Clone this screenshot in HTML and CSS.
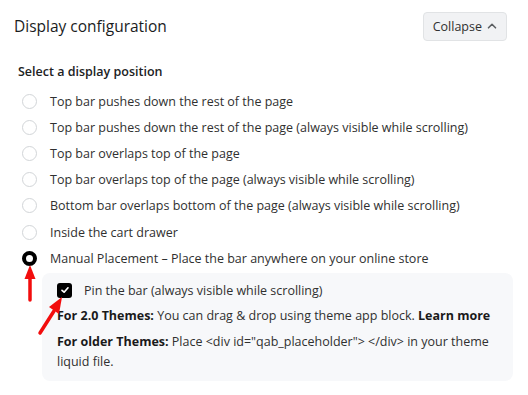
FILE: index.html
```html
<!DOCTYPE html>
<html lang="en">
<head>
  <meta charset="utf-8">
  <title>Display configuration</title>
  <link rel="stylesheet" href="styles.css">
</head>
<body>
  <div class="card">
    <div class="card-head">
      <h2>Display configuration</h2>
      <button class="collapse-btn" type="button">Collapse
        <svg width="10" height="10" viewBox="0 0 10 10"><path d="M1.5 6.8 L5 3.3 L8.5 6.8" fill="none" stroke="#5c5f62" stroke-width="1.6" stroke-linecap="round" stroke-linejoin="round"/></svg>
      </button>
    </div>

    <div class="section">
      <p class="section-title">Select a display position</p>
      <ul class="options">
        <li><span class="radio"></span>Top bar pushes down the rest of the page</li>
        <li><span class="radio"></span>Top bar pushes down the rest of the page (always visible while scrolling)</li>
        <li><span class="radio"></span>Top bar overlaps top of the page</li>
        <li><span class="radio"></span>Top bar overlaps top of the page (always visible while scrolling)</li>
        <li><span class="radio"></span>Bottom bar overlaps bottom of the page (always visible while scrolling)</li>
        <li><span class="radio"></span>Inside the cart drawer</li>
        <li><span class="radio checked"></span>Manual Placement – Place the bar anywhere on your online store</li>
      </ul>

      <div class="manual-panel">
        <div class="pin-row">
          <span class="checkbox">
            <svg width="10" height="10" viewBox="0 0 10 10"><path d="M2 5.3 L4.1 7.2 L8 2.8" fill="none" stroke="#fff" stroke-width="1.7" stroke-linecap="round" stroke-linejoin="round"/></svg>
          </span>
          Pin the bar (always visible while scrolling)
        </div>
        <p class="note"><b>For 2.0 Themes:</b> You can drag &amp; drop using theme app block. <b>Learn more</b></p>
        <p class="note"><b>For older Themes:</b> Place &lt;div id="qab_placeholder"&gt; &lt;/div&gt; in your theme liquid file.</p>
      </div>
    </div>

    <svg class="arrows" width="80" height="80" viewBox="0 0 80 80">
      <g transform="translate(0,-262)">
        <path d="M30 300 L30 276" stroke="#f20d0d" stroke-width="3.5" stroke-linecap="round"/>
        <path d="M24.5 279 L30 265 L35.5 279 Z" fill="#f20d0d"/>
        <path d="M40 333 L54 311" stroke="#f20d0d" stroke-width="3.5" stroke-linecap="round"/>
        <path d="M49 307 L62 297 L59 314 Z" fill="#f20d0d"/>
      </g>
    </svg>
  </div>
</body>
</html>
```

FILE: styles.css
```css
body {
     margin: 0;
     background: #ffffff;
     font-family: "Open Sans", "Noto Sans", sans-serif;
     color: #303030;
}

.card {
     position: relative;
     padding: 10px 21px 0 14px;
}

.card-head {
     display: flex;
     justify-content: space-between;
     align-items: center;
     height: 32px;
}

.card-head h2 {
     margin: 0;
     font-size: 15.5px;
     font-weight: 400;
     color: #1a1c1d;
}

.collapse-btn {
     display: flex;
     align-items: center;
     gap: 5px;
     height: 29px;
     padding: 0 9px 0 9px;
     background: #f1f2f4;
     border: 1px solid #e1e3e5;
     border-radius: 4px;
     font-family: inherit;
     font-size: 12.5px;
     color: #303030;
}

.section {
     padding: 21px 0 0 4px;
}

.section-title {
     margin: 0 0 8px;
     font-size: 12.5px;
     font-weight: 600;
     color: #202223;
}

.options {
     list-style: none;
     margin: 0;
     padding: 0;
}

.options li {
     display: flex;
     align-items: center;
     height: 26.2px;
     font-size: 12.5px;
}

.radio {
     box-sizing: border-box;
     width: 15px;
     height: 15px;
     margin: 0 13px 0 4px;
     border: 1px solid #d2d5d8;
     border-radius: 50%;
}

.radio.checked {
     border: 4.5px solid #000;
     background: #fff;
}

.manual-panel {
     margin: 2px -6px 0 24px;
     padding: 7px 10px 9px 15px;
     background: #f7f8fa;
     border-radius: 8px;
}

.pin-row {
     display: flex;
     align-items: center;
     height: 20px;
     font-size: 12.5px;
}

.checkbox {
     display: flex;
     align-items: center;
     justify-content: center;
     width: 15px;
     height: 15px;
     margin-right: 12px;
     background: #000;
     border-radius: 3px;
}

.note {
     margin: 6px 0 0;
     font-size: 12.5px;
     line-height: 20px;
}

.note b {
     font-weight: 700;
     color: #1a1a1a;
}

.arrows {
     position: absolute;
     left: 0;
     top: 262px;
}
```
